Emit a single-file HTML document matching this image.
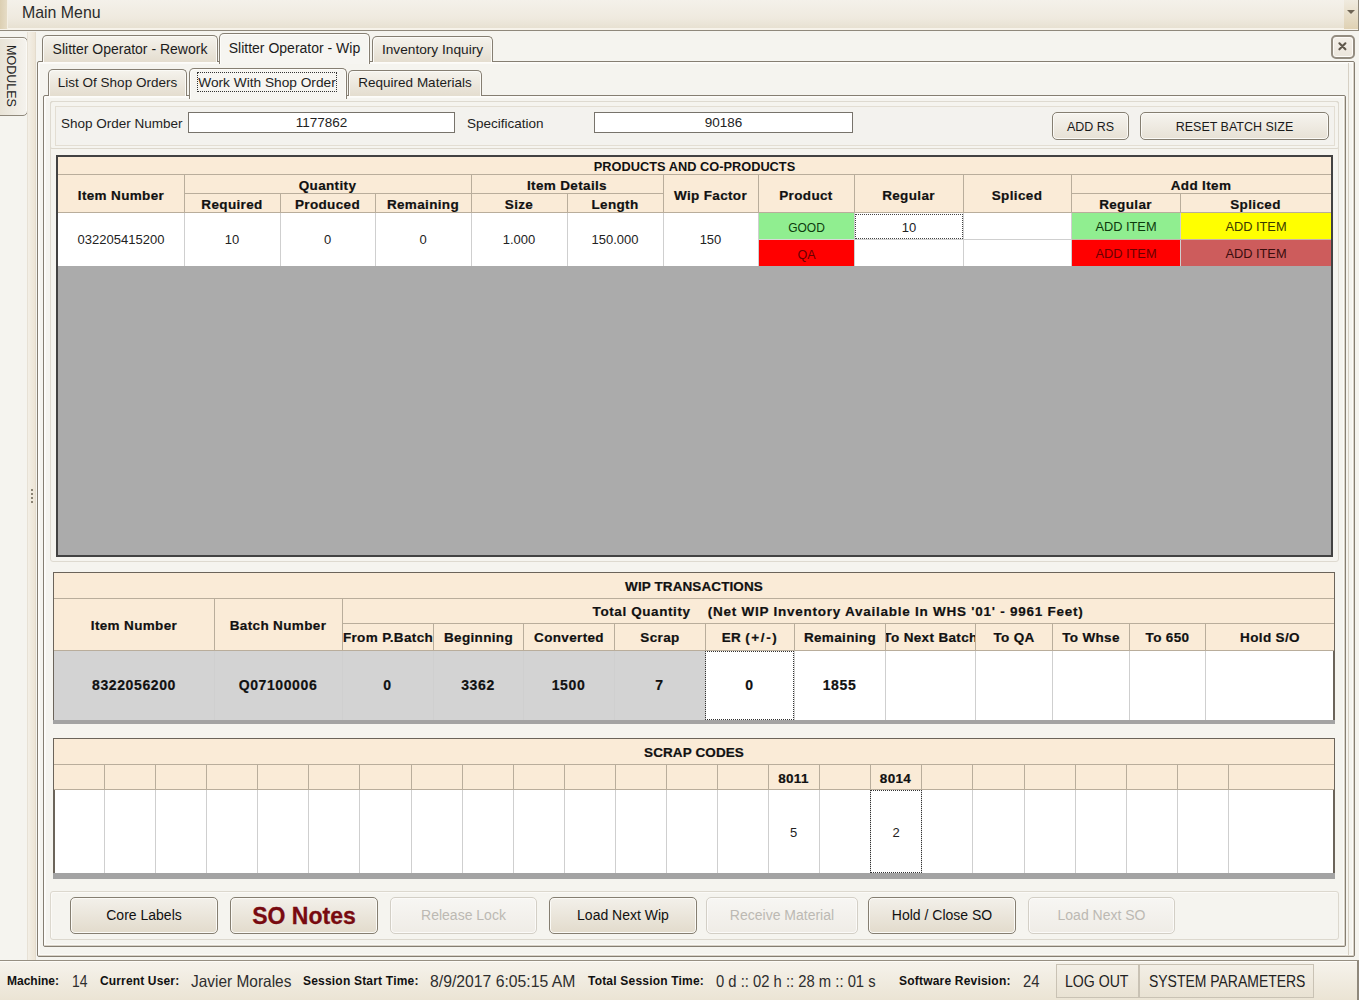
<!DOCTYPE html>
<html><head><meta charset="utf-8">
<style>
*{box-sizing:border-box;margin:0;padding:0}
html,body{width:1359px;height:1000px;overflow:hidden;background:#f5f4ef;font-family:"Liberation Sans",sans-serif;color:#1e1e1e}
.a{position:absolute}
.c{position:absolute;white-space:nowrap;text-align:center;overflow:hidden;display:flex;justify-content:center}
.l{position:absolute;white-space:nowrap;text-align:left}
.b{font-weight:bold;font-size:13px;letter-spacing:0.5px;color:#111}
.n{font-size:13px;color:#222}
</style></head><body>

<div class="a" style="left:0px;top:0px;width:1359px;height:31px;background:linear-gradient(#f4f1ea 0%,#efeadf 60%,#e6dfcf 100%);border-bottom:1px solid #8f887b;box-shadow:inset 0 -2px 0 #f7f3ea"></div>
<div class="a" style="left:0px;top:0px;width:8px;height:29px;background:linear-gradient(90deg,#dccfb2,#e6dcc6);border-right:1px solid #f4efe4"></div>
<div class="a" style="left:1344px;top:0px;width:14px;height:29px;background:linear-gradient(#f0ebdf,#dfd1b3)"></div>
<div class="a" style="left:1358px;top:0px;width:1px;height:31px;background:#8f887a"></div>
<div class="a" style="left:1347px;top:10px;width:0;height:0;border-left:4px solid transparent;border-right:4px solid transparent;border-top:4px solid #6e6454"></div>
<div class="l" style="left:22px;top:3px;font-size:15.9px;line-height:20px;color:#2b2b2b">Main Menu</div>
<div class="a" style="left:-6px;top:37px;width:34px;height:79px;border:1px solid #8f887b;border-radius:0 5px 5px 0;background:linear-gradient(90deg,#e6e0d2,#f5f3ee);box-shadow:inset -1px 1px 0 #fbfaf6"></div>
<div class="l" style="left:3px;top:45px;font-size:12.5px;line-height:15px;writing-mode:vertical-rl;color:#222">MODULES</div>
<div class="a" style="left:27px;top:32px;width:9px;height:929px;background:linear-gradient(90deg,#f3efe6,#ede5d6);border-left:1px solid #e7e1d5;border-right:1px solid #e4dccd"></div>
<div class="a" style="left:31px;top:489px;width:2px;height:2px;background:#8c8474"></div>
<div class="a" style="left:31px;top:493px;width:2px;height:2px;background:#8c8474"></div>
<div class="a" style="left:31px;top:497px;width:2px;height:2px;background:#8c8474"></div>
<div class="a" style="left:31px;top:501px;width:2px;height:2px;background:#8c8474"></div>
<div class="a" style="left:37px;top:61px;width:1318px;height:896px;border:1px solid #857e72;border-radius:2px;background:#f5f4ef;box-shadow:inset 1px 1px 0 #fdfcf9,inset -1px -1px 0 #d8d2c6"></div>
<div class="a" style="left:39px;top:63px;width:1314px;height:892px;border:1px solid #fbfaf7"></div>
<div class="a" style="left:1348px;top:63px;width:1px;height:892px;background:#d6d0c4"></div>
<div class="c" style="left:42px;top:35px;width:176px;height:27px;line-height:27px;border:1px solid #857e72;border-bottom:none;border-radius:5px 5px 0 0;box-shadow:inset 1px 1px 0 #fbfaf6,inset -1px 0 0 #fbfaf6;background:linear-gradient(#f5f3ed,#e4ddcf);font-size:14px;color:#1c1c1c">Slitter Operator - Rework</div>
<div class="c" style="left:372px;top:36px;width:121px;height:26px;line-height:25px;border:1px solid #857e72;border-bottom:none;border-radius:5px 5px 0 0;box-shadow:inset 1px 1px 0 #fbfaf6,inset -1px 0 0 #fbfaf6;background:linear-gradient(#f5f3ed,#e4ddcf);font-size:13.7px;color:#1c1c1c">Inventory Inquiry</div>
<div class="c" style="left:219px;top:33px;width:151px;height:31px;line-height:29px;border:1px solid #857e72;border-bottom:none;border-radius:5px 5px 0 0;box-shadow:inset 1px 1px 0 #fdfcf9,inset -1px 0 0 #fdfcf9;background:#f6f5f1;font-size:14px;color:#1c1c1c">Slitter Operator - Wip</div>
<div class="a" style="left:1331px;top:35px;width:24px;height:24px;border:2px solid #948d81;border-radius:5px;background:linear-gradient(#f3efe8,#ece6dc);box-shadow:inset 0 0 0 1px #fdfbf7"></div>
<svg class="a" style="left:1331px;top:35px" width="24" height="24"><path d="M8.4 8.3 L14.4 14.3 M14.4 8.3 L8.4 14.3" stroke="#5f574b" stroke-width="2.1" stroke-linecap="round"/></svg>
<div class="a" style="left:43px;top:95px;width:1303px;height:852px;border:1px solid #857e72;border-radius:2px;background:#f5f4ef;box-shadow:inset 1px 1px 0 #fdfcf9,inset -1px -1px 0 #d8d2c6"></div>
<div class="a" style="left:45px;top:97px;width:1299px;height:848px;border:1px solid #fbfaf7"></div>
<div class="c" style="left:48px;top:69px;width:139px;height:27px;line-height:25px;border:1px solid #857e72;border-bottom:none;border-radius:5px 5px 0 0;box-shadow:inset 1px 1px 0 #fbfaf6,inset -1px 0 0 #fbfaf6;background:linear-gradient(#f5f3ed,#e4ddcf);font-size:13.5px;color:#1c1c1c">List Of Shop Orders</div>
<div class="c" style="left:348px;top:70px;width:134px;height:26px;line-height:23px;border:1px solid #857e72;border-bottom:none;border-radius:5px 5px 0 0;box-shadow:inset 1px 1px 0 #fbfaf6,inset -1px 0 0 #fbfaf6;background:linear-gradient(#f5f3ed,#e4ddcf);font-size:13.5px;color:#1c1c1c">Required Materials</div>
<div class="c" style="left:189px;top:68px;width:158px;height:31px;line-height:26px;border:1px solid #857e72;border-bottom:none;border-radius:5px 5px 0 0;box-shadow:inset 1px 1px 0 #fdfcf9,inset -1px 0 0 #fdfcf9;background:#f6f5f1;font-size:14px;color:#1c1c1c"></div>
<div class="c" style="left:197px;top:72px;width:140px;height:20px;line-height:19px;border:1px dotted #333;font-size:13.7px;color:#222">Work With Shop Order</div>
<div class="a" style="left:50px;top:101px;width:1289px;height:48px;border:1px solid #dcd7cc;border-radius:2px"></div>
<div class="a" style="left:55px;top:106px;width:1280px;height:40px;border:1px solid #e3ded3;background:#f3f2ee"></div>
<div class="l" style="left:61px;top:115px;font-size:13.5px;line-height:17px;color:#222">Shop Order Number</div>
<div class="c" style="left:188px;top:112px;width:267px;height:21px;line-height:20px;border:1px solid #77736b;background:#fff;font-size:13.5px;color:#222">1177862</div>
<div class="l" style="left:467px;top:115px;font-size:13.5px;line-height:17px;color:#222">Specification</div>
<div class="c" style="left:594px;top:112px;width:259px;height:21px;line-height:20px;border:1px solid #77736b;background:#fff;font-size:13.5px;color:#222">90186</div>
<div class="c" style="left:1052px;top:112px;width:77px;height:28px;line-height:28px;border:1px solid #857e71;border-radius:5px;box-shadow:inset 0 0 0 1px #fbfaf6;background:linear-gradient(#f6f4ef,#e7e1d5);font-size:12.5px;color:#1a1a1a">ADD RS</div>
<div class="c" style="left:1140px;top:112px;width:189px;height:28px;line-height:28px;border:1px solid #857e71;border-radius:5px;box-shadow:inset 0 0 0 1px #fbfaf6;background:linear-gradient(#f6f4ef,#e7e1d5);font-size:12.5px;color:#1a1a1a">RESET BATCH SIZE</div>
<div class="a" style="left:50px;top:101px;width:1289px;height:461px;border:1px solid #dedad0;border-radius:3px"></div>
<div class="a" style="left:56px;top:155px;width:1277px;height:402px;background:#ababab;border:2px solid #424242"></div>
<div class="a" style="left:58px;top:157px;width:1273px;height:56px;background:#faebd7"></div>
<div class="a" style="left:58px;top:213px;width:1273px;height:53px;background:#fff"></div>
<div class="a" style="left:58px;top:174px;width:1273px;height:1px;background:#b9ad9b"></div>
<div class="a" style="left:184px;top:193px;width:479px;height:1px;background:#b9ad9b"></div>
<div class="a" style="left:1071px;top:193px;width:260px;height:1px;background:#b9ad9b"></div>
<div class="a" style="left:58px;top:212px;width:1273px;height:1px;background:#b9ad9b"></div>
<div class="a" style="left:184px;top:175px;width:1px;height:38px;background:#b9ad9b"></div>
<div class="a" style="left:184px;top:213px;width:1px;height:53px;background:#cfcfcf"></div>
<div class="a" style="left:280px;top:194px;width:1px;height:19px;background:#b9ad9b"></div>
<div class="a" style="left:280px;top:213px;width:1px;height:53px;background:#cfcfcf"></div>
<div class="a" style="left:375px;top:194px;width:1px;height:19px;background:#b9ad9b"></div>
<div class="a" style="left:375px;top:213px;width:1px;height:53px;background:#cfcfcf"></div>
<div class="a" style="left:471px;top:175px;width:1px;height:38px;background:#b9ad9b"></div>
<div class="a" style="left:471px;top:213px;width:1px;height:53px;background:#cfcfcf"></div>
<div class="a" style="left:567px;top:194px;width:1px;height:19px;background:#b9ad9b"></div>
<div class="a" style="left:567px;top:213px;width:1px;height:53px;background:#cfcfcf"></div>
<div class="a" style="left:663px;top:175px;width:1px;height:38px;background:#b9ad9b"></div>
<div class="a" style="left:663px;top:213px;width:1px;height:53px;background:#cfcfcf"></div>
<div class="a" style="left:758px;top:175px;width:1px;height:38px;background:#b9ad9b"></div>
<div class="a" style="left:758px;top:213px;width:1px;height:53px;background:#cfcfcf"></div>
<div class="a" style="left:854px;top:175px;width:1px;height:38px;background:#b9ad9b"></div>
<div class="a" style="left:854px;top:213px;width:1px;height:53px;background:#cfcfcf"></div>
<div class="a" style="left:963px;top:175px;width:1px;height:38px;background:#b9ad9b"></div>
<div class="a" style="left:963px;top:213px;width:1px;height:53px;background:#cfcfcf"></div>
<div class="a" style="left:1071px;top:175px;width:1px;height:38px;background:#b9ad9b"></div>
<div class="a" style="left:1071px;top:213px;width:1px;height:53px;background:#cfcfcf"></div>
<div class="a" style="left:1180px;top:194px;width:1px;height:19px;background:#b9ad9b"></div>
<div class="a" style="left:1180px;top:213px;width:1px;height:53px;background:#cfcfcf"></div>
<div class="a" style="left:854px;top:239px;width:217px;height:1px;background:#cfcfcf"></div>
<div class="c" style="left:58px;top:158px;width:1273px;height:18px;line-height:18px;font-weight:bold;font-size:12.8px;color:#111">PRODUCTS AND CO-PRODUCTS</div>
<div class="c" style="left:58px;top:176.5px;width:126px;height:38px;line-height:38px;font-weight:bold;font-size:13.5px;letter-spacing:0.35px;color:#111;-webkit-text-stroke:0.2px #111">Item Number</div>
<div class="c" style="left:184px;top:176px;width:287px;height:19px;line-height:19px;font-weight:bold;font-size:13.5px;letter-spacing:0.35px;color:#111;-webkit-text-stroke:0.2px #111">Quantity</div>
<div class="c" style="left:184px;top:195px;width:96px;height:19px;line-height:19px;font-weight:bold;font-size:13.5px;letter-spacing:0.35px;color:#111;-webkit-text-stroke:0.2px #111">Required</div>
<div class="c" style="left:280px;top:195px;width:95px;height:19px;line-height:19px;font-weight:bold;font-size:13.5px;letter-spacing:0.35px;color:#111;-webkit-text-stroke:0.2px #111">Produced</div>
<div class="c" style="left:375px;top:195px;width:96px;height:19px;line-height:19px;font-weight:bold;font-size:13.5px;letter-spacing:0.35px;color:#111;-webkit-text-stroke:0.2px #111">Remaining</div>
<div class="c" style="left:471px;top:176px;width:192px;height:19px;line-height:19px;font-weight:bold;font-size:13.5px;letter-spacing:0.35px;color:#111;-webkit-text-stroke:0.2px #111">Item Details</div>
<div class="c" style="left:471px;top:195px;width:96px;height:19px;line-height:19px;font-weight:bold;font-size:13.5px;letter-spacing:0.35px;color:#111;-webkit-text-stroke:0.2px #111">Size</div>
<div class="c" style="left:567px;top:195px;width:96px;height:19px;line-height:19px;font-weight:bold;font-size:13.5px;letter-spacing:0.35px;color:#111;-webkit-text-stroke:0.2px #111">Length</div>
<div class="c" style="left:663px;top:176.5px;width:95px;height:38px;line-height:38px;font-weight:bold;font-size:13.5px;letter-spacing:0.35px;color:#111;-webkit-text-stroke:0.2px #111">Wip Factor</div>
<div class="c" style="left:758px;top:176.5px;width:96px;height:38px;line-height:38px;font-weight:bold;font-size:13.5px;letter-spacing:0.35px;color:#111;-webkit-text-stroke:0.2px #111">Product</div>
<div class="c" style="left:854px;top:177px;width:109px;height:38px;line-height:38px;font-weight:bold;font-size:13.5px;letter-spacing:0.35px;color:#111;-webkit-text-stroke:0.2px #111">Regular</div>
<div class="c" style="left:963px;top:177px;width:108px;height:38px;line-height:38px;font-weight:bold;font-size:13.5px;letter-spacing:0.35px;color:#111;-webkit-text-stroke:0.2px #111">Spliced</div>
<div class="c" style="left:1071px;top:176px;width:260px;height:19px;line-height:19px;font-weight:bold;font-size:13.5px;letter-spacing:0.35px;color:#111;-webkit-text-stroke:0.2px #111">Add Item</div>
<div class="c" style="left:1071px;top:194.5px;width:109px;height:19px;line-height:19px;font-weight:bold;font-size:13.5px;letter-spacing:0.35px;color:#111;-webkit-text-stroke:0.2px #111">Regular</div>
<div class="c" style="left:1180px;top:194.5px;width:151px;height:19px;line-height:19px;font-weight:bold;font-size:13.5px;letter-spacing:0.35px;color:#111;-webkit-text-stroke:0.2px #111">Spliced</div>
<div class="c" style="left:58px;top:213px;width:126px;height:53px;line-height:53px;font-size:13px;color:#222">032205415200</div>
<div class="c" style="left:184px;top:213px;width:96px;height:53px;line-height:53px;font-size:13px;color:#222">10</div>
<div class="c" style="left:280px;top:213px;width:95px;height:53px;line-height:53px;font-size:13px;color:#222">0</div>
<div class="c" style="left:375px;top:213px;width:96px;height:53px;line-height:53px;font-size:13px;color:#222">0</div>
<div class="c" style="left:471px;top:213px;width:96px;height:53px;line-height:53px;font-size:13px;color:#222">1.000</div>
<div class="c" style="left:567px;top:213px;width:96px;height:53px;line-height:53px;font-size:13px;color:#222">150.000</div>
<div class="c" style="left:663px;top:213px;width:95px;height:53px;line-height:53px;font-size:13px;color:#222">150</div>
<div class="c" style="left:759px;top:213px;width:95px;height:26px;line-height:26px;padding-top:2px;background:#90ee90;font-size:12px;color:#0d3a0d">GOOD</div>
<div class="c" style="left:759px;top:240px;width:95px;height:26px;line-height:26px;padding-top:2px;background:#ff0000;font-size:12.5px;color:#6a0000">QA</div>
<div class="a" style="left:759px;top:239px;width:95px;height:1px;background:#d8d8d8"></div>
<div class="c" style="left:855px;top:214px;width:108px;height:25px;line-height:25px;font-size:13px;color:#222;border:1px dotted #444">10</div>
<div class="c" style="left:1072px;top:213px;width:108px;height:26px;line-height:26px;padding-top:1px;background:#90ee90;font-size:12.8px;color:#0d3a0d">ADD ITEM</div>
<div class="c" style="left:1181px;top:213px;width:150px;height:26px;line-height:26px;padding-top:1px;background:#ffff00;font-size:12.8px;color:#3a3a00">ADD ITEM</div>
<div class="c" style="left:1072px;top:240px;width:108px;height:26px;line-height:26px;padding-top:1px;background:#ff0000;font-size:12.8px;color:#6a0000">ADD ITEM</div>
<div class="c" style="left:1181px;top:240px;width:150px;height:26px;line-height:26px;padding-top:1px;background:#cd5c5c;font-size:12.8px;color:#3a0d0d">ADD ITEM</div>
<div class="a" style="left:1072px;top:239px;width:259px;height:1px;background:#c8b4a8"></div>
<div class="a" style="left:53px;top:572px;width:1282px;height:152px;background:#fff;border:2px solid #6b645a;border-bottom:none"></div>
<div class="a" style="left:54px;top:573px;width:1280px;height:77px;background:#faebd7"></div>
<div class="a" style="left:54px;top:651px;width:651px;height:69px;background:#d3d3d3"></div>
<div class="a" style="left:53px;top:720px;width:1282px;height:4px;background:#a3a3a3"></div>
<div class="a" style="left:54px;top:598px;width:1280px;height:1px;background:#b9ad9b"></div>
<div class="a" style="left:342px;top:623px;width:992px;height:1px;background:#b9ad9b"></div>
<div class="a" style="left:54px;top:650px;width:1280px;height:1px;background:#b9ad9b"></div>
<div class="a" style="left:214px;top:598px;width:1px;height:52px;background:#b9ad9b"></div>
<div class="a" style="left:214px;top:651px;width:1px;height:69px;background:#cfcfcf"></div>
<div class="a" style="left:342px;top:598px;width:1px;height:52px;background:#b9ad9b"></div>
<div class="a" style="left:342px;top:651px;width:1px;height:69px;background:#cfcfcf"></div>
<div class="a" style="left:433px;top:623px;width:1px;height:27px;background:#b9ad9b"></div>
<div class="a" style="left:433px;top:651px;width:1px;height:69px;background:#cfcfcf"></div>
<div class="a" style="left:523px;top:623px;width:1px;height:27px;background:#b9ad9b"></div>
<div class="a" style="left:523px;top:651px;width:1px;height:69px;background:#cfcfcf"></div>
<div class="a" style="left:614px;top:623px;width:1px;height:27px;background:#b9ad9b"></div>
<div class="a" style="left:614px;top:651px;width:1px;height:69px;background:#cfcfcf"></div>
<div class="a" style="left:705px;top:623px;width:1px;height:27px;background:#b9ad9b"></div>
<div class="a" style="left:705px;top:651px;width:1px;height:69px;background:#cfcfcf"></div>
<div class="a" style="left:794px;top:623px;width:1px;height:27px;background:#b9ad9b"></div>
<div class="a" style="left:794px;top:651px;width:1px;height:69px;background:#cfcfcf"></div>
<div class="a" style="left:885px;top:623px;width:1px;height:27px;background:#b9ad9b"></div>
<div class="a" style="left:885px;top:651px;width:1px;height:69px;background:#cfcfcf"></div>
<div class="a" style="left:975px;top:623px;width:1px;height:27px;background:#b9ad9b"></div>
<div class="a" style="left:975px;top:651px;width:1px;height:69px;background:#cfcfcf"></div>
<div class="a" style="left:1052px;top:623px;width:1px;height:27px;background:#b9ad9b"></div>
<div class="a" style="left:1052px;top:651px;width:1px;height:69px;background:#cfcfcf"></div>
<div class="a" style="left:1129px;top:623px;width:1px;height:27px;background:#b9ad9b"></div>
<div class="a" style="left:1129px;top:651px;width:1px;height:69px;background:#cfcfcf"></div>
<div class="a" style="left:1205px;top:623px;width:1px;height:27px;background:#b9ad9b"></div>
<div class="a" style="left:1205px;top:651px;width:1px;height:69px;background:#cfcfcf"></div>
<div class="c" style="left:54px;top:574px;width:1280px;height:25px;line-height:25px;font-weight:bold;font-size:13.5px;letter-spacing:0.35px;color:#111;-webkit-text-stroke:0.2px #111;letter-spacing:0.1px">WIP TRANSACTIONS</div>
<div class="c" style="left:342px;top:599px;width:992px;height:26px;line-height:26px;font-weight:bold;font-size:13.5px;letter-spacing:0.35px;color:#111;-webkit-text-stroke:0.2px #111;letter-spacing:0"><span id="tq" style="letter-spacing:0.6px">Total Quantity</span><span style="display:inline-block;width:17px"></span><span id="nw" style="letter-spacing:0.75px">(Net WIP Inventory Available In WHS '01' - 9961 Feet)</span></div>
<div class="c" style="left:54px;top:600px;width:160px;height:52px;line-height:52px;font-weight:bold;font-size:13.5px;letter-spacing:0.35px;color:#111;-webkit-text-stroke:0.2px #111">Item Number</div>
<div class="c" style="left:214px;top:600px;width:128px;height:52px;line-height:52px;font-weight:bold;font-size:13.5px;letter-spacing:0.35px;color:#111;-webkit-text-stroke:0.2px #111">Batch Number</div>
<div class="c" style="left:343px;top:625px;width:90px;height:26px;line-height:26px;font-weight:bold;font-size:13.5px;letter-spacing:0.35px;color:#111;-webkit-text-stroke:0.2px #111">From P.Batch</div>
<div class="c" style="left:434px;top:625px;width:89px;height:26px;line-height:26px;font-weight:bold;font-size:13.5px;letter-spacing:0.35px;color:#111;-webkit-text-stroke:0.2px #111">Beginning</div>
<div class="c" style="left:524px;top:625px;width:90px;height:26px;line-height:26px;font-weight:bold;font-size:13.5px;letter-spacing:0.35px;color:#111;-webkit-text-stroke:0.2px #111">Converted</div>
<div class="c" style="left:615px;top:625px;width:90px;height:26px;line-height:26px;font-weight:bold;font-size:13.5px;letter-spacing:0.35px;color:#111;-webkit-text-stroke:0.2px #111">Scrap</div>
<div class="c" style="left:706px;top:625px;width:88px;height:26px;line-height:26px;font-weight:bold;font-size:13.5px;letter-spacing:0.35px;color:#111;-webkit-text-stroke:0.2px #111">ER&nbsp;<span style="letter-spacing:1.6px">(+/-)</span></div>
<div class="c" style="left:795px;top:625px;width:90px;height:26px;line-height:26px;font-weight:bold;font-size:13.5px;letter-spacing:0.35px;color:#111;-webkit-text-stroke:0.2px #111">Remaining</div>
<div class="c" style="left:886px;top:625px;width:89px;height:26px;line-height:26px;font-weight:bold;font-size:13.5px;letter-spacing:0.35px;color:#111;-webkit-text-stroke:0.2px #111">To Next Batch</div>
<div class="c" style="left:976px;top:625px;width:76px;height:26px;line-height:26px;font-weight:bold;font-size:13.5px;letter-spacing:0.35px;color:#111;-webkit-text-stroke:0.2px #111">To QA</div>
<div class="c" style="left:1053px;top:625px;width:76px;height:26px;line-height:26px;font-weight:bold;font-size:13.5px;letter-spacing:0.35px;color:#111;-webkit-text-stroke:0.2px #111">To Whse</div>
<div class="c" style="left:1130px;top:625px;width:75px;height:26px;line-height:26px;font-weight:bold;font-size:13.5px;letter-spacing:0.35px;color:#111;-webkit-text-stroke:0.2px #111">To 650</div>
<div class="c" style="left:1206px;top:625px;width:128px;height:26px;line-height:26px;font-weight:bold;font-size:13.5px;letter-spacing:0.35px;color:#111;-webkit-text-stroke:0.2px #111">Hold S/O</div>
<div class="c" style="left:54px;top:651px;width:160px;height:69px;line-height:69px;font-weight:bold;font-size:14px;letter-spacing:0.6px;color:#111;-webkit-text-stroke:0.2px #111">8322056200</div>
<div class="c" style="left:214px;top:651px;width:128px;height:69px;line-height:69px;font-weight:bold;font-size:14px;letter-spacing:0.6px;color:#111;-webkit-text-stroke:0.2px #111">Q07100006</div>
<div class="c" style="left:342px;top:651px;width:91px;height:69px;line-height:69px;font-weight:bold;font-size:14px;letter-spacing:0.6px;color:#111;-webkit-text-stroke:0.2px #111">0</div>
<div class="c" style="left:433px;top:651px;width:90px;height:69px;line-height:69px;font-weight:bold;font-size:14px;letter-spacing:0.6px;color:#111;-webkit-text-stroke:0.2px #111">3362</div>
<div class="c" style="left:523px;top:651px;width:91px;height:69px;line-height:69px;font-weight:bold;font-size:14px;letter-spacing:0.6px;color:#111;-webkit-text-stroke:0.2px #111">1500</div>
<div class="c" style="left:614px;top:651px;width:91px;height:69px;line-height:69px;font-weight:bold;font-size:14px;letter-spacing:0.6px;color:#111;-webkit-text-stroke:0.2px #111">7</div>
<div class="c" style="left:705px;top:651px;width:89px;height:69px;line-height:69px;font-weight:bold;font-size:14px;letter-spacing:0.6px;color:#111;-webkit-text-stroke:0.2px #111">0</div>
<div class="c" style="left:794px;top:651px;width:91px;height:69px;line-height:69px;font-weight:bold;font-size:14px;letter-spacing:0.6px;color:#111;-webkit-text-stroke:0.2px #111">1855</div>
<div class="a" style="left:705px;top:651px;width:89px;height:69px;border:1px dotted #333"></div>
<div class="a" style="left:53px;top:738px;width:1282px;height:140px;background:#fff;border:2px solid #6b645a;border-bottom:none"></div>
<div class="a" style="left:54px;top:739px;width:1280px;height:51px;background:#faebd7"></div>
<div class="a" style="left:53px;top:873px;width:1282px;height:6px;background:#a3a3a3"></div>
<div class="a" style="left:54px;top:764px;width:1280px;height:1px;background:#b9ad9b"></div>
<div class="a" style="left:54px;top:789px;width:1280px;height:1px;background:#b9ad9b"></div>
<div class="a" style="left:104px;top:764px;width:1px;height:25px;background:#b9ad9b"></div>
<div class="a" style="left:104px;top:790px;width:1px;height:83px;background:#cfcfcf"></div>
<div class="a" style="left:155px;top:764px;width:1px;height:25px;background:#b9ad9b"></div>
<div class="a" style="left:155px;top:790px;width:1px;height:83px;background:#cfcfcf"></div>
<div class="a" style="left:206px;top:764px;width:1px;height:25px;background:#b9ad9b"></div>
<div class="a" style="left:206px;top:790px;width:1px;height:83px;background:#cfcfcf"></div>
<div class="a" style="left:257px;top:764px;width:1px;height:25px;background:#b9ad9b"></div>
<div class="a" style="left:257px;top:790px;width:1px;height:83px;background:#cfcfcf"></div>
<div class="a" style="left:308px;top:764px;width:1px;height:25px;background:#b9ad9b"></div>
<div class="a" style="left:308px;top:790px;width:1px;height:83px;background:#cfcfcf"></div>
<div class="a" style="left:359px;top:764px;width:1px;height:25px;background:#b9ad9b"></div>
<div class="a" style="left:359px;top:790px;width:1px;height:83px;background:#cfcfcf"></div>
<div class="a" style="left:411px;top:764px;width:1px;height:25px;background:#b9ad9b"></div>
<div class="a" style="left:411px;top:790px;width:1px;height:83px;background:#cfcfcf"></div>
<div class="a" style="left:462px;top:764px;width:1px;height:25px;background:#b9ad9b"></div>
<div class="a" style="left:462px;top:790px;width:1px;height:83px;background:#cfcfcf"></div>
<div class="a" style="left:513px;top:764px;width:1px;height:25px;background:#b9ad9b"></div>
<div class="a" style="left:513px;top:790px;width:1px;height:83px;background:#cfcfcf"></div>
<div class="a" style="left:564px;top:764px;width:1px;height:25px;background:#b9ad9b"></div>
<div class="a" style="left:564px;top:790px;width:1px;height:83px;background:#cfcfcf"></div>
<div class="a" style="left:615px;top:764px;width:1px;height:25px;background:#b9ad9b"></div>
<div class="a" style="left:615px;top:790px;width:1px;height:83px;background:#cfcfcf"></div>
<div class="a" style="left:666px;top:764px;width:1px;height:25px;background:#b9ad9b"></div>
<div class="a" style="left:666px;top:790px;width:1px;height:83px;background:#cfcfcf"></div>
<div class="a" style="left:717px;top:764px;width:1px;height:25px;background:#b9ad9b"></div>
<div class="a" style="left:717px;top:790px;width:1px;height:83px;background:#cfcfcf"></div>
<div class="a" style="left:768px;top:764px;width:1px;height:25px;background:#b9ad9b"></div>
<div class="a" style="left:768px;top:790px;width:1px;height:83px;background:#cfcfcf"></div>
<div class="a" style="left:819px;top:764px;width:1px;height:25px;background:#b9ad9b"></div>
<div class="a" style="left:819px;top:790px;width:1px;height:83px;background:#cfcfcf"></div>
<div class="a" style="left:870px;top:764px;width:1px;height:25px;background:#b9ad9b"></div>
<div class="a" style="left:870px;top:790px;width:1px;height:83px;background:#cfcfcf"></div>
<div class="a" style="left:921px;top:764px;width:1px;height:25px;background:#b9ad9b"></div>
<div class="a" style="left:921px;top:790px;width:1px;height:83px;background:#cfcfcf"></div>
<div class="a" style="left:972px;top:764px;width:1px;height:25px;background:#b9ad9b"></div>
<div class="a" style="left:972px;top:790px;width:1px;height:83px;background:#cfcfcf"></div>
<div class="a" style="left:1024px;top:764px;width:1px;height:25px;background:#b9ad9b"></div>
<div class="a" style="left:1024px;top:790px;width:1px;height:83px;background:#cfcfcf"></div>
<div class="a" style="left:1075px;top:764px;width:1px;height:25px;background:#b9ad9b"></div>
<div class="a" style="left:1075px;top:790px;width:1px;height:83px;background:#cfcfcf"></div>
<div class="a" style="left:1126px;top:764px;width:1px;height:25px;background:#b9ad9b"></div>
<div class="a" style="left:1126px;top:790px;width:1px;height:83px;background:#cfcfcf"></div>
<div class="a" style="left:1177px;top:764px;width:1px;height:25px;background:#b9ad9b"></div>
<div class="a" style="left:1177px;top:790px;width:1px;height:83px;background:#cfcfcf"></div>
<div class="a" style="left:1228px;top:764px;width:1px;height:25px;background:#b9ad9b"></div>
<div class="a" style="left:1228px;top:790px;width:1px;height:83px;background:#cfcfcf"></div>
<div class="c" style="left:54px;top:740px;width:1280px;height:25px;line-height:25px;font-weight:bold;font-size:13.5px;letter-spacing:0.35px;color:#111;-webkit-text-stroke:0.2px #111;letter-spacing:0.1px">SCRAP CODES</div>
<div class="c" style="left:768px;top:766.5px;width:51px;height:24px;line-height:24px;font-weight:bold;font-size:13.5px;letter-spacing:0.35px;color:#111;-webkit-text-stroke:0.2px #111">8011</div>
<div class="c" style="left:870px;top:766.5px;width:51px;height:24px;line-height:24px;font-weight:bold;font-size:13.5px;letter-spacing:0.35px;color:#111;-webkit-text-stroke:0.2px #111">8014</div>
<div class="c" style="left:768px;top:791px;width:51px;height:83px;line-height:83px;font-size:13px;color:#222">5</div>
<div class="c" style="left:870px;top:790px;width:52px;height:83px;line-height:83px;font-size:13px;color:#222;border:1px dotted #333">2</div>
<div class="a" style="left:50px;top:891px;width:1289px;height:49px;border:1px solid #dcd8ce;border-radius:3px;box-shadow:inset 1px 1px 0 #fbfaf7"></div>
<div class="c" style="left:70px;top:897px;width:148px;height:37px;line-height:37px;line-height:34px;border:1px solid #857e71;border-radius:5px;background:linear-gradient(#f3f0ea,#e2dbcc);font-size:14px;color:#111;box-shadow:inset 0 0 0 1px #fbfaf6;">Core Labels</div>
<div class="c" style="left:230px;top:897px;width:148px;height:37px;line-height:37px;line-height:34px;border:1px solid #857e71;border-radius:5px;background:linear-gradient(#f3f0ea,#e2dbcc);font-size:14px;color:#111;box-shadow:inset 0 0 0 1px #fbfaf6;font-size:23px;font-weight:bold;color:#780a10;-webkit-text-stroke:0.3px #780a10;padding-top:1px">SO Notes</div>
<div class="c" style="left:390px;top:897px;width:147px;height:37px;line-height:37px;line-height:34px;border:1px solid #d3cfc6;border-radius:5px;background:linear-gradient(#f7f6f3,#efece6);font-size:14px;color:#bcb9b3;box-shadow:inset 0 0 0 1px #fbfaf8;">Release Lock</div>
<div class="c" style="left:549px;top:897px;width:148px;height:37px;line-height:37px;line-height:34px;border:1px solid #857e71;border-radius:5px;background:linear-gradient(#f3f0ea,#e2dbcc);font-size:14px;color:#111;box-shadow:inset 0 0 0 1px #fbfaf6;">Load Next Wip</div>
<div class="c" style="left:706px;top:897px;width:152px;height:37px;line-height:37px;line-height:34px;border:1px solid #d3cfc6;border-radius:5px;background:linear-gradient(#f7f6f3,#efece6);font-size:14px;color:#bcb9b3;box-shadow:inset 0 0 0 1px #fbfaf8;">Receive Material</div>
<div class="c" style="left:868px;top:897px;width:148px;height:37px;line-height:37px;line-height:34px;border:1px solid #857e71;border-radius:5px;background:linear-gradient(#f3f0ea,#e2dbcc);font-size:14px;color:#111;box-shadow:inset 0 0 0 1px #fbfaf6;">Hold / Close SO</div>
<div class="c" style="left:1028px;top:897px;width:147px;height:37px;line-height:37px;line-height:34px;border:1px solid #d3cfc6;border-radius:5px;background:linear-gradient(#f7f6f3,#efece6);font-size:14px;color:#bcb9b3;box-shadow:inset 0 0 0 1px #fbfaf8;">Load Next SO</div>
<div class="a" style="left:0px;top:960px;width:1359px;height:40px;background:linear-gradient(#f6f3ec,#ebe4d4);border-top:1px solid #968f82;box-shadow:inset 0 1px 0 #fdfbf6"></div>
<div class="a" style="left:1357px;top:961px;width:2px;height:39px;background:#8f887b"></div>
<div class="l" style="left:7px;top:972px;line-height:18px;font-weight:bold;font-size:12px;color:#111">Machine:</div>
<div class="l" style="left:72px;top:971px;line-height:20px;transform-origin:0 50%;transform:scaleX(0.84);font-size:16.5px;color:#2e2e2e">14</div>
<div class="l" style="left:100px;top:972px;line-height:18px;font-weight:bold;font-size:12px;color:#111;letter-spacing:0.15px">Current User:</div>
<div class="l" style="left:191px;top:971px;line-height:20px;transform-origin:0 50%;transform:scaleX(0.936);font-size:16.5px;color:#2e2e2e">Javier Morales</div>
<div class="l" style="left:303px;top:972px;line-height:18px;font-weight:bold;font-size:12px;color:#111;letter-spacing:0.2px">Session Start Time:</div>
<div class="l" style="left:430px;top:971px;line-height:20px;transform-origin:0 50%;transform:scaleX(0.954);font-size:16.5px;color:#2e2e2e">8/9/2017 6:05:15 AM</div>
<div class="l" style="left:588px;top:972px;line-height:18px;font-weight:bold;font-size:12px;color:#111;letter-spacing:0.2px">Total Session Time:</div>
<div class="l" style="left:715.5px;top:971px;line-height:20px;transform-origin:0 50%;transform:scaleX(0.897);font-size:16.5px;color:#2e2e2e">0 d :: 02 h :: 28 m :: 01 s</div>
<div class="l" style="left:899px;top:972px;line-height:18px;font-weight:bold;font-size:12px;color:#111;letter-spacing:0.2px">Software Revision:</div>
<div class="l" style="left:1022.5px;top:971px;line-height:20px;transform-origin:0 50%;transform:scaleX(0.9);font-size:16.5px;color:#2e2e2e">24</div>
<div class="a" style="left:1056px;top:964px;width:83px;height:34px;border:1px solid #c9c2b4;background:linear-gradient(#f3efe6,#e9e2d3)"></div>
<div class="a" style="left:1139px;top:964px;width:175px;height:34px;border:1px solid #c9c2b4;background:linear-gradient(#f3efe6,#e9e2d3)"></div>
<div class="l" style="left:1065px;top:971px;line-height:20px;transform-origin:0 50%;transform:scaleX(0.855);font-size:16.5px;color:#222">LOG OUT</div>
<div class="l" style="left:1148.5px;top:971px;line-height:20px;transform-origin:0 50%;transform:scaleX(0.846);font-size:16.5px;color:#222">SYSTEM PARAMETERS</div>
</body></html>
